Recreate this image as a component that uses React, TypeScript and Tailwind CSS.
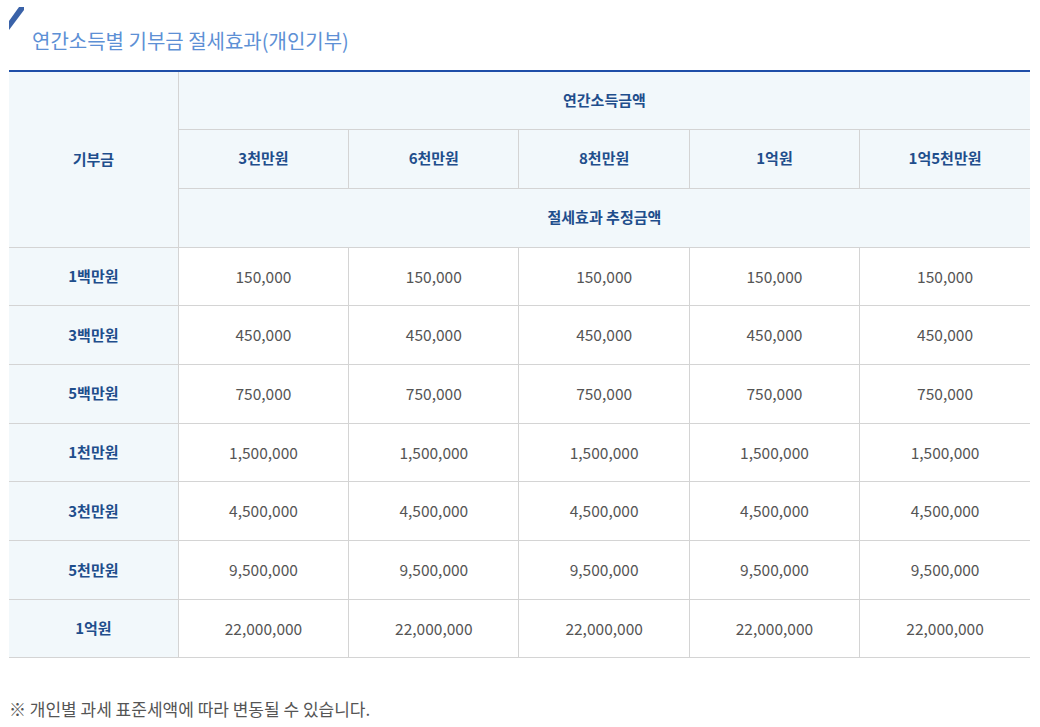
import React from "react";

const cols = ["3천만원", "6천만원", "8천만원", "1억원", "1억5천만원"];
const rows: [string, string][] = [
  ["1백만원", "150,000"],
  ["3백만원", "450,000"],
  ["5백만원", "750,000"],
  ["1천만원", "1,500,000"],
  ["3천만원", "4,500,000"],
  ["5천만원", "9,500,000"],
  ["1억원", "22,000,000"],
];

export default function App() {
  const hd = "bg-[#f2f8fb] text-[#1f4e8c] font-bold text-[15px] border-[#d4d4d4]";
  return (
    <div className="w-[1040px] h-[727px] bg-white relative" style={{ fontFamily: '"Noto Sans CJK KR", "Noto Sans", sans-serif' }}>
      <div className="pl-[9px] pt-[7px] flex">
        <svg width="15" height="23" viewBox="0 0 15 23"><polygon points="0,14 10,0 15,0 15,3 0,23" fill="#3a62a8" /></svg>
      </div>
      <div className="pl-[32px] -mt-[2px] text-[20px] text-[#5d90d5] leading-[26px]">연간소득별 기부금 절세효과(개인기부)</div>
      <table className="ml-[9px] mt-[16px] w-[1021px] border-collapse table-fixed border-t-2 border-t-[#1f4fa8] text-center">
        <colgroup>
          <col className="w-[169px]" />
          {cols.map((c) => <col key={c} className="w-[170px]" />)}
        </colgroup>
        <thead>
          <tr className="h-[58px]">
            <th rowSpan={3} className={`${hd} border-b border-r`}>기부금</th>
            <th colSpan={5} className={`${hd} border-b`}>연간소득금액</th>
          </tr>
          <tr className="h-[59px]">
            {cols.map((c, i) => (
              <th key={c} className={`${hd} border-b ${i < 4 ? "border-r" : ""}`}>{c}</th>
            ))}
          </tr>
          <tr className="h-[59px]">
            <th colSpan={5} className={`${hd} border-b`}>절세효과 추정금액</th>
          </tr>
        </thead>
        <tbody>
          {rows.map(([k, v]) => (
            <tr key={k} className="h-[58.7px]">
              <td className={`${hd} border-b border-r`}>{k}</td>
              {cols.map((c, i) => (
                <td key={c} className={`text-[15.5px] text-[#555] border-b border-[#d4d4d4] ${i < 4 ? "border-r" : ""}`}>{v}</td>
              ))}
            </tr>
          ))}
        </tbody>
      </table>
      <div className="pl-[9px] mt-[38px] text-[17px] text-[#555]">※ 개인별 과세 표준세액에 따라 변동될 수 있습니다.</div>
    </div>
  );
}
